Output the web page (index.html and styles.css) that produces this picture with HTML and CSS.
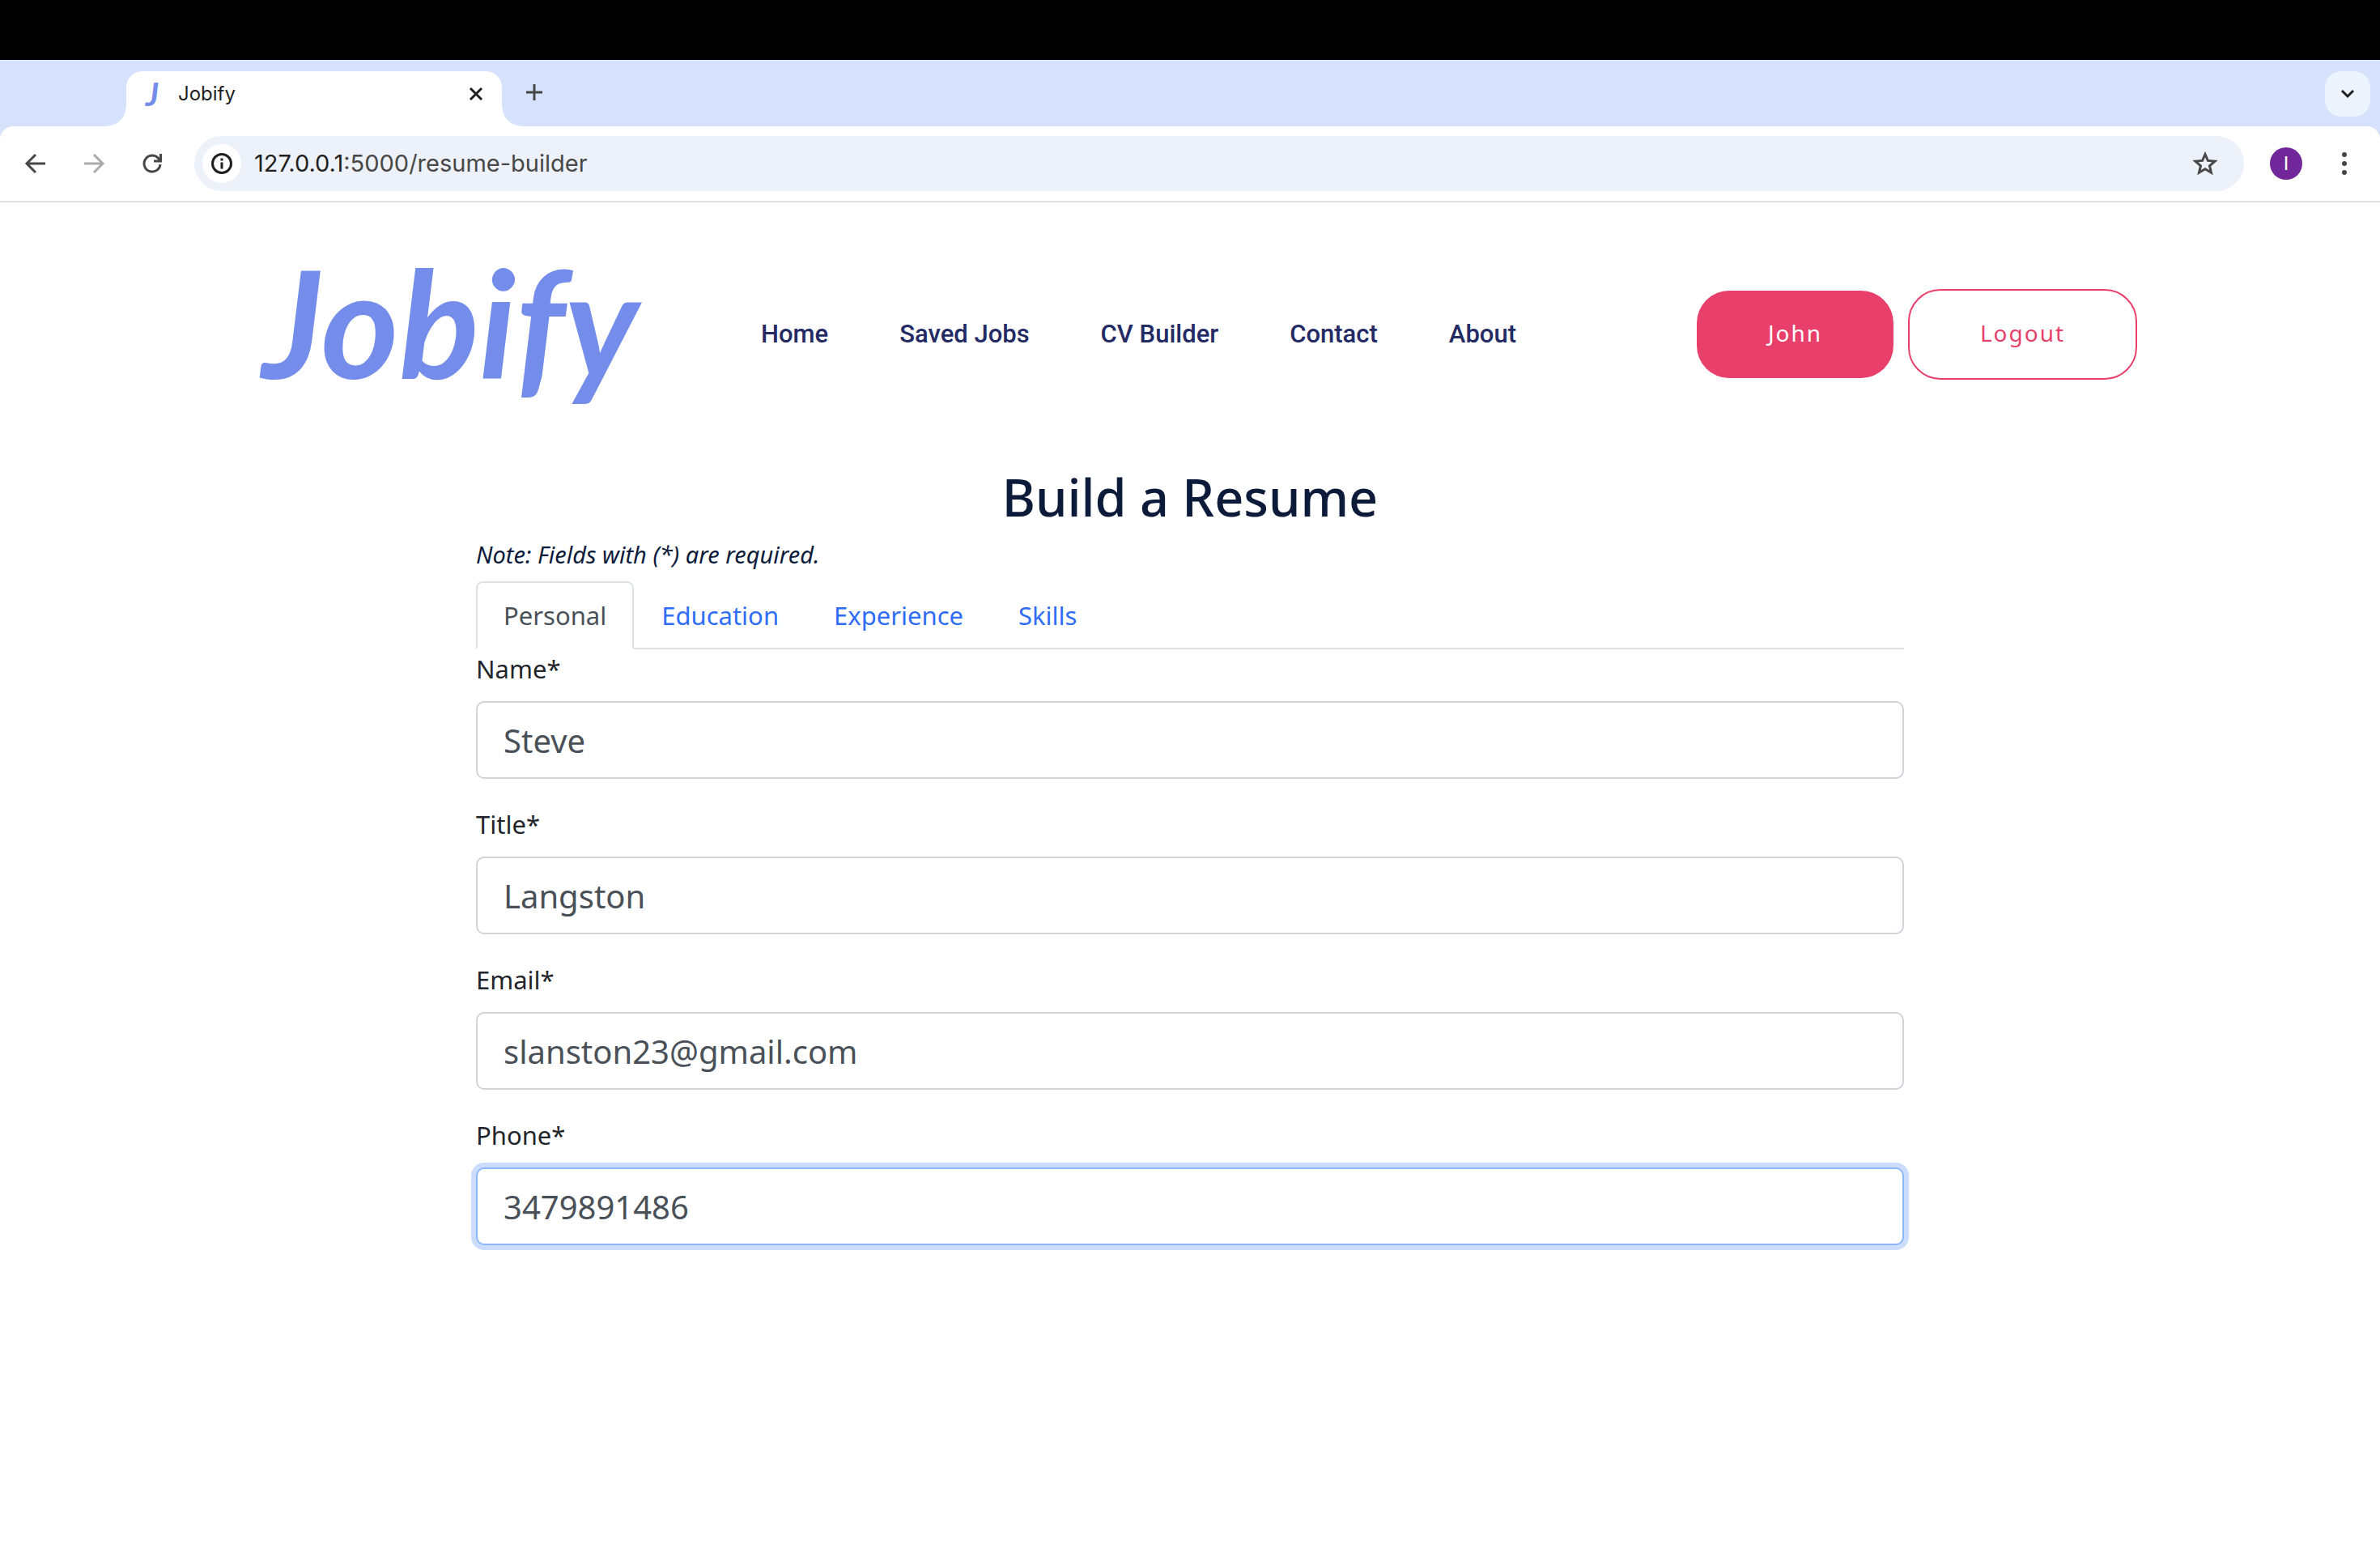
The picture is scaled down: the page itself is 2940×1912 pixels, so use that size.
FILE: index.html
```html
<!DOCTYPE html>
<html lang="en">
<head>
<meta charset="utf-8">
<meta name="viewport" content="width=device-width, initial-scale=1">
<title>Jobify</title>
<link rel="stylesheet" href="styles.css">
</head>
<body>
<div class="menubar"></div>

<div class="tabstrip">
  <div class="browser-tab">
    <span class="favicon" aria-hidden="true">J</span>
    <span class="tab-title">Jobify</span>
    <button class="icon-btn" type="button" aria-label="Close tab">
      <svg width="32" height="32" viewBox="0 0 32 32" fill="none" stroke="#1f1f1f" stroke-width="3"><path d="M9 9l14 14M23 9L9 23"/></svg>
    </button>
  </div>
  <button class="icon-btn new-tab" type="button" aria-label="New tab">
    <svg width="32" height="32" viewBox="0 0 32 32" fill="none" stroke="#474747" stroke-width="3"><path d="M16 6v20M6 16h20"/></svg>
  </button>
  <button class="icon-btn tab-search" type="button" aria-label="Search tabs">
    <svg width="32" height="32" viewBox="0 0 32 32" fill="none" stroke="#1f1f1f" stroke-width="3"><path d="M9 12l7 7 7-7"/></svg>
  </button>
</div>

<div class="toolbar-bg">
  <div class="toolbar">
    <div class="history">
      <button class="icon-btn" type="button" aria-label="Back">
        <svg width="32" height="32" viewBox="0 0 32 32" fill="none" stroke="#474747" stroke-width="3"><path d="M28 16H6M16 5L5 16l11 11"/></svg>
      </button>
      <button class="icon-btn" type="button" aria-label="Forward">
        <svg width="32" height="32" viewBox="0 0 32 32" fill="none" stroke="#ababab" stroke-width="3"><path d="M4 16h22M16 5l11 11-11 11"/></svg>
      </button>
      <button class="icon-btn" type="button" aria-label="Reload">
        <svg width="32" height="32" viewBox="0 0 32 32" fill="none" stroke="#474747" stroke-width="3"><path d="M26 17a10 10 0 1 1-2-7l3 3M26.500 4v9H18"/></svg>
      </button>
    </div>
    <div class="address">
      <button class="icon-btn site-info" type="button" aria-label="Site information">
        <svg width="32" height="32" viewBox="0 0 32 32" fill="none" stroke="#1f1f1f" stroke-width="3"><circle cx="16" cy="16" r="11.500"/><path d="M16 14.500v8M16 9.500v3"/></svg>
      </button>
      <span class="url"><span class="host">127.0.0.1</span>:5000/resume-builder</span>
      <button class="icon-btn" type="button" aria-label="Bookmark">
        <svg width="32" height="32" viewBox="0 0 32 32" fill="none" stroke="#474747" stroke-width="3"><path d="M16 4.500l3.400 7.900 8.600.7-6.500 5.700 2 8.400-7.500-4.500-7.500 4.500 2-8.400L4 13.100l8.600-.7z"/></svg>
      </button>
    </div>
    <button class="avatar" type="button">I</button>
    <button class="icon-btn" type="button" aria-label="Menu">
      <svg width="32" height="32" viewBox="0 0 32 32" fill="#474747"><circle cx="16" cy="5" r="3"/><circle cx="16" cy="16" r="3"/><circle cx="16" cy="27" r="3"/></svg>
    </button>
  </div>
</div>

<header class="site-header">
  <a class="logo" href="#">Jobify</a>
  <nav class="site-nav">
    <a href="#">Home</a>
    <a href="#">Saved Jobs</a>
    <a href="#">CV Builder</a>
    <a href="#">Contact</a>
    <a href="#">About</a>
  </nav>
  <div class="account">
    <button class="btn btn-solid" type="button">John</button>
    <button class="btn btn-outline" type="button">Logout</button>
  </div>
</header>

<main class="builder">
  <h1>Build a Resume</h1>
  <p class="note">Note: Fields with (*) are required.</p>
  <nav class="form-tabs">
    <a class="form-tab active" href="#personal">Personal</a>
    <a class="form-tab" href="#education">Education</a>
    <a class="form-tab" href="#experience">Experience</a>
    <a class="form-tab" href="#skills">Skills</a>
  </nav>
  <form class="fields" id="personal">
    <div class="field">
      <label for="name">Name*</label>
      <input id="name" type="text" value="Steve">
    </div>
    <div class="field">
      <label for="title">Title*</label>
      <input id="title" type="text" value="Langston">
    </div>
    <div class="field">
      <label for="email">Email*</label>
      <input id="email" type="text" value="slanston23@gmail.com">
    </div>
    <div class="field">
      <label for="phone">Phone*</label>
      <input id="phone" class="focused" type="text" value="3479891486">
    </div>
  </form>
</main>
</body>
</html>
```
FILE: styles.css
```css
* {
  box-sizing: border-box;
}

body {
  margin: 0;
  background: #fff;
  color: #212529;
  font: 31px/48px "Noto Sans", sans-serif;
}

a {
  text-decoration: none;
}

button {
  margin: 0;
  padding: 0;
  border: 0;
  background: none;
  font: inherit;
}

svg {
  display: block;
}

/* Browser window */
.menubar {
  height: 74px;
  background: #000;
}

.tabstrip {
  display: flex;
  align-items: flex-start;
  height: 82px;
  padding: 14px 12px 0 156px;
  background: #d6e1fc;
}

.browser-tab {
  position: relative;
  display: flex;
  align-items: center;
  width: 464px;
  height: 68px;
  padding: 0 16px 12px;
  border-radius: 20px 20px 0 0;
  background: #fff;
}

.browser-tab::before,
.browser-tab::after {
  content: "";
  position: absolute;
  bottom: 0;
  width: 24px;
  height: 24px;
}

.browser-tab::before {
  right: 100%;
  background: radial-gradient(circle at 0 0, transparent 23px, #fff 24px);
}

.browser-tab::after {
  left: 100%;
  background: radial-gradient(circle at 100% 0, transparent 23px, #fff 24px);
}

.favicon {
  width: 32px;
  margin-right: 16px;
  color: #748dea;
  font: italic 700 40px/40px Lato, sans-serif;
  text-align: center;
}

.tab-title {
  flex: 1;
  color: #1f1f1f;
  font: 24px/32px Inter, sans-serif;
}

.icon-btn {
  flex: none;
  display: grid;
  place-items: center;
}

.new-tab {
  width: 56px;
  height: 52px;
  margin-left: 12px;
}

.tab-search {
  width: 56px;
  height: 56px;
  margin-left: auto;
  border-radius: 20px;
  background: #ecf3fd;
}

.toolbar-bg {
  background: #d6e1fc;
}

.toolbar {
  display: flex;
  align-items: center;
  height: 94px;
  padding: 0 28px;
  border-bottom: 2px solid #e0e0e0;
  border-radius: 16px 16px 0 0;
  background: #fff;
}

.history {
  display: flex;
  gap: 40px;
  margin-right: 36px;
}

.address {
  flex: 1;
  display: flex;
  align-items: center;
  height: 68px;
  padding: 0 32px 0 10px;
  border-radius: 34px;
  background: #edf2fa;
}

.site-info {
  width: 48px;
  height: 48px;
  border-radius: 50%;
  background: #fff;
}

.url {
  flex: 1;
  margin-left: 16px;
  color: #474747;
  font: 29px/40px Inter, sans-serif;
}

.host {
  color: #1f1f1f;
}

.avatar {
  width: 40px;
  height: 40px;
  margin: 0 36px 0 32px;
  border-radius: 50%;
  background: #71269a;
  color: #fff;
  font: 24px/40px Roboto, sans-serif;
}

/* Site header */
.site-header {
  display: flex;
  align-items: center;
  height: 326px;
  padding: 0 300px 0 324px;
}

.logo {
  flex: none;
  width: 616px;
  padding-bottom: 32px;
  color: #748dea;
  font: italic 700 184px/240px Lato, sans-serif;
}

.site-nav {
  display: flex;
  gap: 88px;
  font: 500 31px/48px Roboto, sans-serif;
}

.site-nav a {
  color: #242b64;
}

.account {
  display: flex;
  align-items: center;
  gap: 18px;
  margin-left: auto;
}

.btn {
  padding-bottom: 4px;
  border-radius: 40px;
  font-size: 28px;
  letter-spacing: 2px;
}

.btn-solid {
  width: 243px;
  height: 108px;
  background: #e83f6b;
  color: #fff;
}

.btn-outline {
  width: 283px;
  height: 112px;
  border: 2px solid #e83f6b;
  color: #e83f6b;
}

/* Resume form */
.builder {
  width: 60%;
  margin: 0 auto;
  padding-bottom: 96px;
}

h1 {
  margin: 0;
  color: #0d1b3b;
  font-size: 63px;
  font-weight: 500;
  line-height: 76px;
  text-align: center;
}

.note {
  margin: 12px 0;
  color: #0d1b3b;
  font-size: 29px;
  font-style: italic;
  line-height: 42px;
}

.form-tabs {
  display: flex;
  border-bottom: 2px solid #dee2e6;
}

.form-tab {
  margin-bottom: -2px;
  padding: 16px 32px;
  border: 2px solid transparent;
  border-radius: 8px 8px 0 0;
  color: #2f6df6;
}

.form-tab.active {
  border-color: #dee2e6 #dee2e6 #fff;
  background: #fff;
  color: #495057;
}

.fields {
  display: grid;
  gap: 32px;
}

.field {
  display: grid;
  gap: 16px;
}

.field input {
  width: 100%;
  height: 96px;
  padding: 0 32px;
  border: 2px solid #ced4da;
  border-radius: 10px;
  outline: 0;
  background: #fff;
  color: #495057;
  font: 40px/60px "Noto Sans", sans-serif;
}

.field input.focused {
  border-color: #8bb8fb;
  box-shadow: 0 0 0 6px #cbdcff;
}
```
